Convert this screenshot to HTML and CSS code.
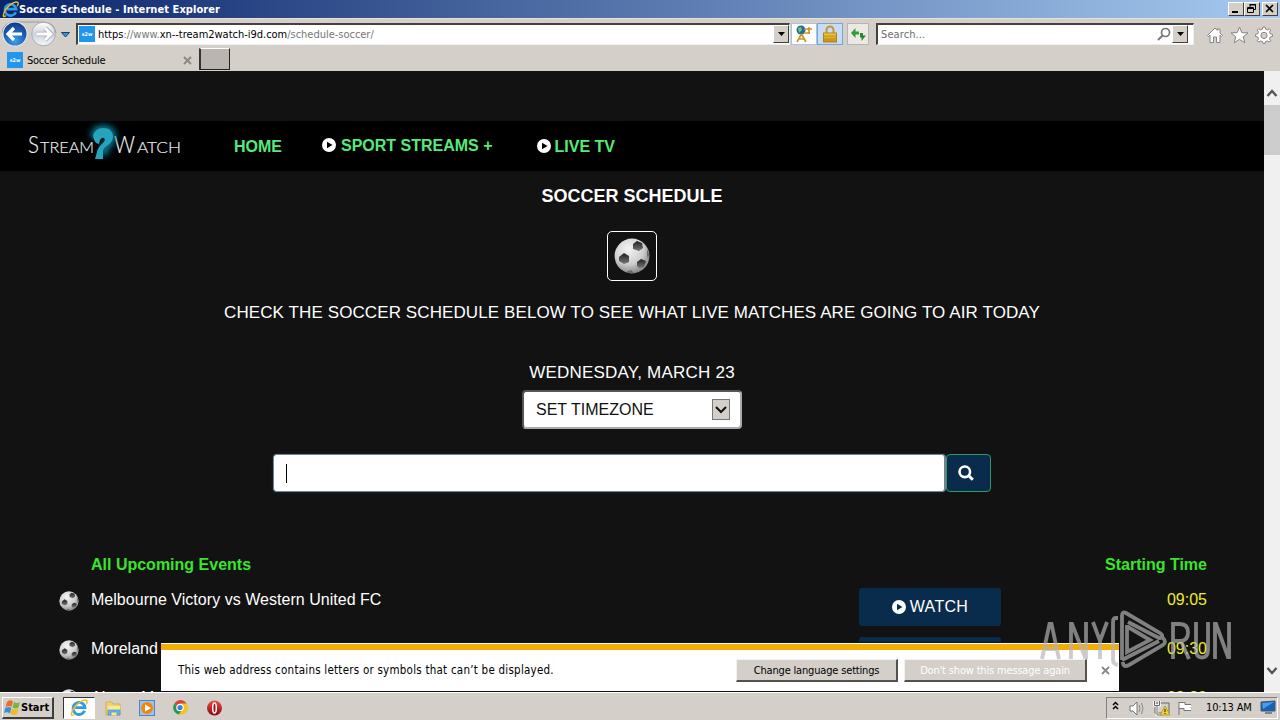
FILE: index.html
```html
<!DOCTYPE html>
<html lang="en">
<head>
<meta charset="utf-8">
<title>Soccer Schedule</title>
<link rel="stylesheet" href="styles.css">
</head>
<body>
<svg class="defs" width="0" height="0">
  <defs>
    <radialGradient id="ballg" cx=".4" cy=".3" r=".72"><stop offset="0" stop-color="#f4f4f4"/><stop offset=".6" stop-color="#cfcfcf"/><stop offset="1" stop-color="#858585"/></radialGradient>
    <linearGradient id="patch" x1="0" y1="0" x2="0" y2="1"><stop offset="0" stop-color="#202020"/><stop offset="1" stop-color="#777"/></linearGradient>
    <radialGradient id="blue" cx=".5" cy=".8" r=".8"><stop offset="0" stop-color="#3fa0e8"/><stop offset=".6" stop-color="#1c5cb4"/><stop offset="1" stop-color="#123a80"/></radialGradient>
    <linearGradient id="pale" x1="0" y1="0" x2="0" y2="1"><stop offset="0" stop-color="#fff"/><stop offset=".5" stop-color="#cdd3dc"/><stop offset="1" stop-color="#f4f6fa"/></linearGradient>
    <linearGradient id="gold" x1="0" y1="0" x2="0" y2="1"><stop offset="0" stop-color="#f6cf4a"/><stop offset="1" stop-color="#c58d10"/></linearGradient>
    <linearGradient id="red" x1="0" y1="0" x2="0" y2="1"><stop offset="0" stop-color="#e8504a"/><stop offset="1" stop-color="#8c0708"/></linearGradient>
    <filter id="glow" x="-1" y="-1" width="3" height="3"><feGaussianBlur stdDeviation="3"/></filter>
  </defs>
  <symbol id="ball" viewBox="0 0 36 36">
    <circle cx="18" cy="18" r="17.4" fill="url(#ballg)"/>
    <path d="M19 6l4-3 5 2 1 5-4 3-6-2z" fill="url(#patch)"/>
    <path d="M5 19l5-4 5 3v6l-5 2-5-3z" fill="url(#patch)"/>
    <path d="M23 24l4-3 5 2-2 6-5 1-2-2z" fill="url(#patch)"/>
    <path d="M12 34l5-2 3 3-3 .6zM33 11l2 5-1 5-1-4z" fill="#666"/>
  </symbol>
  <symbol id="play" viewBox="0 0 14 14"><path fill-rule="evenodd" fill="#fff" d="M7 0a7 7 0 1 1 0 14A7 7 0 0 1 7 0zM5 3.8v6.4L10.5 7z"/></symbol>
  <symbol id="ie" viewBox="0 0 18 18">
    <path d="M14.6 11.8A6 6 0 1 1 15 8.6H5.2" fill="none" stroke="#2f9be0" stroke-width="2.8"/>
    <path d="M4 15.5C.5 18.500.5 14 4 9 8 3.500 14 0 16.500 1.500c1.200.8.500 2.500-.3 4" fill="none" stroke="#eebd2e" stroke-width="1.500"/>
  </symbol>
  <symbol id="fav" viewBox="0 0 16 16"><rect width="16" height="16" fill="#2196ee"/><text x="2.800" y="9.500" font-size="5" font-weight="700" fill="#fff" textLength="10.500" lengthAdjust="spacingAndGlyphs">s2w</text></symbol>
  <symbol id="down" viewBox="0 0 7 4"><path d="M0 0h7L3.500 4z"/></symbol>
</svg>

<div class="titlebar">
  <svg class="tie" width="17" height="17"><use href="#ie"/></svg>
  <span class="wtitle">Soccer Schedule - Internet Explorer</span>
  <div class="wbtns">
    <span class="wb"><svg width="14" height="12"><path d="M3 8h6v2H3z"/></svg></span>
    <span class="wb"><svg width="14" height="12"><path d="M5 1.500h5.500v5H9M5 1v3M5 2h6" fill="none" stroke="#000"/><path d="M2.500 4.500h6v5h-6zM2 5.500h7" fill="none" stroke="#000"/></svg></span>
    <span class="wb gap"><svg width="14" height="12"><path d="M3 2l7 7M10 2L3 9" stroke="#000" stroke-width="1.700"/></svg></span>
  </div>
</div>

<div class="toolbar">
  <svg class="navbtns" width="76" height="30" viewBox="0 0 76 30">
    <path d="M2 14Q3 3 15 3h28q11 0 13 11" fill="none" stroke="#9b9a98"/>
    <circle cx="15" cy="15" r="12.500" fill="#e8eef8"/><circle cx="15" cy="15" r="11.500" fill="url(#blue)"/>
    <path d="M8 15h14M14 9l-6 6 6 6" fill="none" stroke="#fff" stroke-width="3.200"/>
    <circle cx="43.500" cy="15" r="11.800" fill="url(#pale)" stroke="#a9adb5"/>
    <path d="M36.500 15h14M45 9l6 6-6 6" fill="none" stroke="#a3a9b4" stroke-width="4.400"/><path d="M36.500 15h14M45 9l6 6-6 6" fill="none" stroke="#fff" stroke-width="2.800"/>
    <path d="M61.500 13.500h8l-4 4.500z" fill="#3b93d3" stroke="#1c3f70"/>
  </svg>
  <div class="field addr">
    <svg width="16" height="16"><use href="#fav"/></svg>
    <span class="url"><b>https</b>://www.<b>xn--tream2watch-i9d.com</b>/schedule-soccer/</span>
    <span class="drop"><svg width="7" height="4"><use href="#down"/></svg></span>
  </div>
  <div class="pair">
    <span class="sq"><svg width="20" height="18"><circle cx="7" cy="5" r="4.500" fill="#246a9c"/><path d="M4 3l3-1 1 3-3 3z" fill="#7bc27d"/><path d="M7.500 9L3 17M7.500 9l4.500 8M5 14h5M10 4h8M15 2v7M10 8h6" stroke="#c89520" stroke-width="1.600" fill="none"/></svg></span>
    <span class="sq on"><svg width="18" height="18"><path d="M5.500 9V5a3.500 3.500 0 0 1 7 0v4" fill="none" stroke="#c39834" stroke-width="2"/><rect x="2.500" y="8" width="13" height="9" fill="url(#gold)" stroke="#b48218"/><path d="M3 11h12M3 14h12" stroke="#c48e15"/></svg></span>
  </div>
  <span class="sq refresh"><svg width="16" height="16"><path d="M1 7l4.500-5v3.500H9v3H5.500V12z" fill="#2f9f35"/><path d="M16 9.500L11.500 15v-3.500H8v-0h2V7H13v2.500z" fill="#25872b"/></svg></span>
  <div class="field search">
    <span class="ph">Search...</span>
    <svg width="14" height="14"><circle cx="8.500" cy="5.500" r="4" fill="none" stroke="#777" stroke-width="1.700"/><path d="M5.500 8.500L1 13" stroke="#777" stroke-width="2"/></svg>
    <span class="drop"><svg width="7" height="4"><use href="#down"/></svg></span>
  </div>
  <svg class="cmds" width="70" height="20" viewBox="0 0 70 20">
    <g fill="#fff" stroke="#87847f" stroke-linejoin="round">
      <path d="M1.500 10.500L9 3l2.500 2.300V4H14v4l2.500 2.500-1 1L14 10v7.500h-3.500V12h-3v5.500H4V10l-1.500 1.500z"/>
      <path d="M33.500 2l2.300 5.600 6.200.3-4.800 3.900 1.700 6-5.400-3.400-5.300 3.400 1.600-6L25 7.900l6.200-.3z"/>
      <path fill-rule="evenodd" d="M57 2h2l.6 2.200 1.700.7 2-1.200 1.400 1.400-1.200 2 .7 1.700 2.300.6v2l-2.300.6-.7 1.700 1.200 2-1.400 1.400-2-1.200-1.700.7L59 18.500h-2l-.6-1.900-1.700-.7-2 1.200-1.400-1.400 1.200-2-.7-1.700-2.300-.6v-2l2.300-.6.700-1.700-1.200-2 1.400-1.400 2 1.200 1.700-.7zM58 7.300a3.100 3.100 0 1 0 0 6.200 3.100 3.100 0 0 0 0-6.200z"/>
    </g>
  </svg>
</div>

<div class="tabs">
  <div class="tab"><svg width="16" height="16"><use href="#fav"/></svg><span class="tname">Soccer Schedule</span><svg width="9" height="9"><path d="M1 1l7 7M8 1L1 8" stroke="#8b8783" stroke-width="1.900"/></svg></div>
  <div class="newtab"></div>
</div>

<div class="view">
  <main class="page">
    <nav class="nav">
      <svg class="logo" width="160" height="50" viewBox="0 0 160 50">
        <g font-family="Lato, sans-serif" font-weight="300" fill="#f4f4f4" stroke="#ddd" stroke-width=".2">
          <text x="1" y="32" font-size="22.500" textLength="11" lengthAdjust="spacingAndGlyphs">S</text>
          <text x="13" y="32" font-size="16.500" textLength="54" lengthAdjust="spacingAndGlyphs">TREAM</text>
          <text x="87" y="32" font-size="22.500" textLength="21" lengthAdjust="spacingAndGlyphs">W</text>
          <text x="110" y="32" font-size="16.500" textLength="44" lengthAdjust="spacingAndGlyphs">ATCH</text>
        </g>
        <path d="M67 17q1-9 9-9 10 0 9 9-1 4-6 8l-3 9" fill="none" stroke="#087b98" stroke-width="8" filter="url(#glow)"/>
        <path d="M66 15q2-8 10-8 9 0 10 8 0 6-5 9-5 3-5 7v7h-8l2-7q1-5 6-9 3-3 1-5-2-1-4 2l-1 4q-5-1-6-8z" fill="#25a4bb"/>
      </svg>
      <a class="home">HOME</a>
      <a class="sport"><svg width="14" height="14"><use href="#play"/></svg>SPORT STREAMS +</a>
      <a class="live"><svg width="14" height="14"><use href="#play"/></svg>LIVE TV</a>
    </nav>
    <h1>SOCCER SCHEDULE</h1>
    <div class="ballbox"><svg width="36" height="36"><use href="#ball"/></svg></div>
    <p class="lead">CHECK THE SOCCER SCHEDULE BELOW TO SEE WHAT LIVE MATCHES ARE GOING TO AIR TODAY</p>
    <p class="date">WEDNESDAY, MARCH 23</p>
    <div class="tz"><span>SET TIMEZONE</span><span class="tzb"><svg width="12" height="8"><path d="M1 1l5 5 5-5" fill="none" stroke="#111" stroke-width="2"/></svg></span></div>
    <div class="find"><div class="box"><i class="caret"></i></div><div class="go"><svg width="16" height="16"><circle cx="6.800" cy="6.800" r="5.300" fill="none" stroke="#fff" stroke-width="2.600"/><path d="M10.500 10.500l4.300 4.300" stroke="#fff" stroke-width="3"/></svg></div></div>
    <div class="ev head"><span class="name">All Upcoming Events</span><span class="time">Starting Time</span></div>
    <div class="ev"><svg class="sb" width="20" height="20"><use href="#ball"/></svg><span class="name">Melbourne Victory vs Western United FC</span><a class="watch"><svg width="14" height="14"><use href="#play"/></svg>WATCH</a><span class="time">09:05</span></div>
    <div class="ev"><svg class="sb" width="20" height="20"><use href="#ball"/></svg><span class="name">Moreland</span><a class="watch"><svg width="14" height="14"><use href="#play"/></svg>WATCH</a><span class="time">09:30</span></div>
    <div class="ev"><svg class="sb" width="20" height="20"><use href="#ball"/></svg><span class="name">Altona M</span><a class="watch"><svg width="14" height="14"><use href="#play"/></svg>WATCH</a><span class="time">09:30</span></div>
  </main>
  <div class="scroll">
    <svg width="16" height="34"><path d="M3.500 25L8 20l4.500 5" fill="none" stroke="#555" stroke-width="2.400"/></svg>
    <div class="thumb"></div>
    <svg class="sdown" width="16" height="30"><path d="M3.500 6L8 11l4.500-5" fill="none" stroke="#555" stroke-width="2.400"/></svg>
  </div>
  <div class="notice">
    <span class="msg">This web address contains letters or symbols that can’t be displayed.</span>
    <span class="nb n1">Change language settings</span><span class="nb n2">Don't show this message again</span>
    <svg width="9" height="9"><path d="M1 1l7 7M8 1L1 8" stroke="#8b8783" stroke-width="1.800"/></svg>
  </div>
  <svg class="mark" width="194" height="64" viewBox="0 0 194 64">
    <g fill="none" stroke="#b4b4b4" stroke-width="3.800">
      <path d="M3 50L10.500 15h2L20 50M6 40h11M32 50V15h1l13 33h1V13M54 13l7 19 7-19M61 31v19"/>
      <path d="M134 50V15h7q8 0 8 8.500T141 32h-7m8 0l8 18M157 13v28q0 7.500 6 7.500t6-7.500V13M176 50V15h1l12 33h1V13"/>
      <path d="M79 9h-2q-3 0-3 4v38q0 4 5 5M83 51V7q0-5 4-3l34 20q3 2 2 4t-5 0L89 13M88 16v27l23-12-22-13M83 51l37-19M124 29q4 4 0 7L90 56q-6 3-6-3"/>
    </g>
  </svg>
</div>

<div class="taskbar">
  <div class="start"><svg width="17" height="17"><path d="M3 3q3-3 6-.5L7.500 8Q5 6 1.500 8z" fill="#ed6a32"/><path d="M10 3q3 2 6 0l-1.500 5.500q-3 2-6 0z" fill="#75b837"/><path d="M1.300 9Q5 7 7.300 9L6 14.500Q3 12.500 0 14z" fill="#3d8ed2"/><path d="M8 9.500q3 2 6.500 0L13 15q-3 2-6.500 0z" fill="#f2bc28"/></svg><span>Start</span></div>
  <div class="act"><svg width="18" height="18"><use href="#ie"/></svg></div>
  <svg class="quick" width="130" height="20" viewBox="0 0 130 20">
    <path d="M6 4h6l1 2h7v11H6z" fill="#efd36e" stroke="#ceb04a"/><path d="M8 8h12v9H8z" fill="#f8e89b"/><path d="M8 17v-5h12v5h-3v-3h-6v3z" fill="#67b7e2" stroke="#4a94bd" stroke-width=".7"/>
    <rect x="39.500" y="2.500" width="15" height="15" fill="#9fc4ea" stroke="#4b86c2"/><circle cx="47" cy="10" r="6" fill="#ee8712"/><path d="M45 6.500v7l6-3.500z" fill="#fff"/>
    <g transform="translate(-1 -.5)"><path d="M81 10L75.500 6a7 7 0 0 1 12 0z" fill="#d94435"/><path d="M81 10L75.500 6A7 7 0 0 0 80 17l4-5z" fill="#28984b"/><path d="M81 6h6.500A7 7 0 0 1 80 17l4-6z" fill="#f1c52a"/><circle cx="81" cy="10" r="3.200" fill="#3e80dc" stroke="#fff" stroke-width="1.200"/></g>
    <circle cx="114.500" cy="10" r="7.500" fill="url(#red)"/><ellipse cx="114.500" cy="10" rx="1.800" ry="5" fill="#9f1515" stroke="#fff" stroke-width="1.500"/>
  </svg>
  <div class="tray">
    <svg width="84" height="20" viewBox="0 0 84 20">
      <path d="M6 8l2.500-2.500L11 8M6 12l2.500-2.500L11 12" fill="none" stroke="#000" stroke-width="1.500" transform="translate(0 -1)"/>
      <path d="M23 8h3l4-4v13l-4-4h-3z" fill="#fff" stroke="#777"/><path d="M32 7q2 3 0 7M34.500 5q3 5 0 11" fill="none" stroke="#888"/>
      <path d="M48 5h14v10H48z" fill="#cfcfcb" stroke="#666"/><path d="M47.500 3v4.500h5V3M50 8v9h5" fill="none" stroke="#fff" stroke-width="2.500"/><path d="M47.500 3v4.500h5V3M50 8v9h5" fill="none" stroke="#666"/><path d="M58 8l5 9H53z" fill="#f5cf2a" stroke="#a8871c" stroke-width=".7"/><path d="M58 11v3m0 1v1" stroke="#222"/>
      <path d="M72 17V4M72 4.500h6v2h8l-2 3 2 3h-9v-2h-5" fill="#fff" stroke="#777"/>
    </svg>
    <span class="clock">10:13 AM</span>
    <svg width="17" height="15"><path d="M1 2l14-1v10H1z" fill="#1762b7" stroke="#3b5875"/><path d="M2 3l12-1L3 9z" fill="#4b9be8"/><path d="M5 13h7" stroke="#667" stroke-width="1.500"/></svg>
  </div>
</div>
</body>
</html>
```
FILE: styles.css
```css
* { box-sizing: border-box; }
body { margin: 0; width: 1280px; height: 720px; overflow: hidden; display: flex; flex-direction: column; background: #d4cfc8; font-family: "DejaVu Sans Condensed", "DejaVu Sans", sans-serif; font-stretch: condensed; font-size: 11px; color: #000; }
svg { flex: none; display: block; }
.defs { position: absolute; }
p, h1 { margin: 0; }

.titlebar { height: 18px; flex: none; display: flex; align-items: center; padding-left: 2px; background: linear-gradient(90deg, #0a246a, #a6caf0); }
.wtitle { color: #fff; font-weight: 700; font-size: 11px; letter-spacing: 0.07px; }
.wbtns { margin-left: auto; display: flex; padding-right: 2px; }
.wb { width: 16px; height: 14px; background: #d4d0c8; border: 1px solid; border-color: #fff #404040 #404040 #fff; }
.gap { margin-left: 2px; }

.toolbar { height: 30px; flex: none; display: flex; align-items: center; border-top: 1px solid #e4e0da; }
.field { height: 22px; background: #fff; border: 1px solid; border-width: 2px 1px 1px 2px; border-color: #45413e #eee #eee #45413e; display: flex; align-items: center; }
.addr { width: 714px; padding-left: 1px; }
.url { margin-left: 3px; color: #777; letter-spacing: -0.02px; }
.url b { color: #000; font-weight: 400; }
.drop { margin-left: auto; width: 16px; height: 18px; background: #d4d0c8; border: 1px solid; border-color: #fff #404040 #404040 #fff; display: flex; align-items: center; justify-content: center; }
.pair { display: flex; margin-left: 1px; }
.sq { width: 26px; height: 22px; background: #fff; border: 1px solid #a8c6e4; display: flex; align-items: center; justify-content: center; }
.on { background: #c7dcf5; border-color: #76a5d8; }
.refresh { width: 22px; margin-left: 4px; background: #ece9e5; border-color: #b8b4ae; }
.search { width: 318px; margin-left: 7px; padding-left: 3px; }
.ph { color: #6d6d6d; flex: 1; letter-spacing: 0.1px; }
.search .drop { margin: 0 5px 0 1px; }
.cmds { margin-left: 12px; margin-top: 2px; }

.tabs { height: 23px; flex: none; display: flex; }
.tab { width: 199px; display: flex; align-items: center; padding: 1px 7px 0; }
.tname { margin-left: 4px; flex: 1; letter-spacing: -0.25px; }
.newtab { width: 31px; height: 22px; background: #bbb5af; border: 1px solid; border-width: 1px 1px 1px 2px; border-color: #fff #222 #222 #333; }

.view { flex: 1; min-height: 0; display: flex; position: relative; overflow: hidden; }
.page { width: 1264px; background: #121212; color: #fff; font-family: "Liberation Sans", Arial, sans-serif; font-stretch: normal; font-size: 16px; padding-top: 50px; display: flex; flex-direction: column; align-items: center; overflow: hidden; }
.page > * { flex: none; }
.nav { width: 100%; height: 50px; background: #000; display: flex; align-items: center; color: #55ea79; font-weight: 700; }
.nav a { display: flex; align-items: center; gap: 5px; margin-top: 2px; }
.nav a svg { margin-bottom: 2px; }
.logo { margin-left: 27px; }
.nav .home { margin-left: 47px; }
.nav .sport { margin-left: 40px; padding-bottom: 2px; }
.nav .live { margin-left: 44px; gap: 4px; }
h1 { font-size: 18px; line-height: 20px; margin-top: 15px; }
.ballbox { width: 50px; height: 50px; margin-top: 25px; border: 1px solid #fff; border-radius: 5px; display: flex; align-items: center; justify-content: center; }
.lead { font-size: 17px; line-height: 20px; margin-top: 22px; white-space: nowrap; letter-spacing: 0.1px; }
.date { font-size: 17px; line-height: 20px; margin-top: 40px; letter-spacing: 0.22px; }
.tz { width: 220px; height: 39px; margin-top: 7px; padding: 0 10px 0 12px; border: 2px solid; border-color: #555 #aaa #aaa #555; border-radius: 4px; background: #fff; color: #111; display: flex; justify-content: space-between; align-items: center; }
.tzb { width: 18px; height: 21px; border: 1px solid #777; background: #d4cfc8; display: flex; align-items: center; justify-content: center; }
.find { width: 718px; height: 38px; margin-top: 25px; display: flex; }
.box { width: 673px; background: #fff; border: 1px solid #73828c; border-right-width: 2px; border-radius: 4px; padding: 9px 12px; box-shadow: 0 0 3px #123048; }
.caret { display: block; width: 1px; height: 19px; background: #000; }
.go { width: 45px; background: #0a2c4c; border: 1px solid #2e9a60; border-radius: 4px; padding: 10px 0 0 11px; }
.ev { width: 100%; height: 49px; padding: 0 57px 0 59px; display: flex; align-items: flex-start; line-height: 20px; }
.ev.head { height: 24px; margin-top: 63px; padding-left: 91px; color: #3ae42c; font-weight: 700; }
.head + .ev { margin-top: 9px; }
.ev .sb { margin-top: 3px; }
.name { flex: 1; margin: 2px 0 0 12px; white-space: nowrap; letter-spacing: 0.03px; }
.head .name { margin: 0; letter-spacing: 0; }
.time { margin-top: 2px; width: 206px; text-align: right; color: #ecec2d; }
.head .time { margin: 0; color: inherit; }
.watch { width: 142px; height: 38px; border-radius: 3px; background: #0a2c4c; display: flex; align-items: center; justify-content: center; gap: 4px; letter-spacing: 0.3px; }

.scroll { width: 16px; background: #f0f0f0; display: flex; flex-direction: column; }
.thumb { height: 50px; background: #cdcdcd; }
.sdown { margin-top: auto; }
.notice { position: absolute; left: 161px; top: 571px; width: 959px; height: 50px; background: #fff; border: 1px solid #111; border-width: 1px 1px 1px 0; box-shadow: inset 0 1px #fff, inset 0 7px #f5ad05; display: flex; align-items: center; padding: 6px 9px 0 17px; }
.msg { flex: 1; letter-spacing: 0.24px; font-size: 11.500px; }
.nb { height: 23px; background: #d4cfc8; border: 1px solid; border-width: 1px 2px 2px 1px; border-color: #f4f2ee #55514d #55514d #f4f2ee; display: flex; align-items: center; justify-content: center; white-space: nowrap; padding-top: 2px; letter-spacing: -0.17px; }
.n1 { width: 162px; }
.n2 { width: 183px; margin: 0 14px 0 6px; color: #fff; }
.mark { position: absolute; left: 1039px; top: 538px; opacity: 0.68; }

.taskbar { height: 28px; flex: none; display: flex; align-items: center; padding: 2px 2px 0; border-top: 1px solid #fff; background: #d4cfc8; }
.start { width: 52px; height: 22px; border: 1px solid; border-width: 1px 2px 2px 1px; border-color: #fff #3c3c3c #3c3c3c #fff; display: flex; align-items: center; font-size: 11px; font-weight: 700; padding-left: 1px; }
.act { margin-left: 9px; width: 32px; height: 22px; background: #fff; border: 1px solid; border-color: #333 #fff #fff #333; display: flex; align-items: center; justify-content: center; }
.quick { margin-left: 5px; }
.tray { margin-left: auto; width: 172px; height: 22px; border: 1px solid; border-color: #858079 #fff #fff #858079; display: flex; align-items: center; }
.clock { margin-left: 15px; flex: 1; letter-spacing: -0.15px; white-space: nowrap; }
```
